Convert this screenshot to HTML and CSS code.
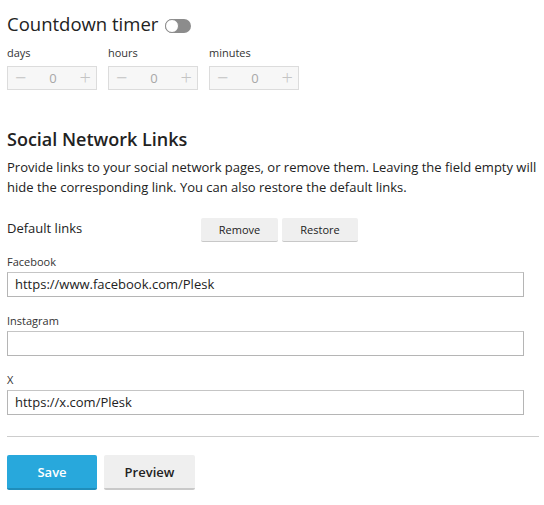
FILE: index.html
```html
<!DOCTYPE html>
<html>
<head>
<meta charset="utf-8">
<link rel="stylesheet" href="styles.css">
</head>
<body>
<div class="page">
  <h2 class="title">Countdown timer <span class="toggle"><span class="knob"></span></span></h2>
  <div class="timers">
    <div class="timer">
      <div class="small-label">days</div>
      <div class="stepper"><span class="op">&minus;</span><span class="val">0</span><span class="op">+</span></div>
    </div>
    <div class="timer">
      <div class="small-label">hours</div>
      <div class="stepper"><span class="op">&minus;</span><span class="val">0</span><span class="op">+</span></div>
    </div>
    <div class="timer">
      <div class="small-label">minutes</div>
      <div class="stepper"><span class="op">&minus;</span><span class="val">0</span><span class="op">+</span></div>
    </div>
  </div>

  <h3 class="section">Social Network Links</h3>
  <p class="desc">Provide links to your social network pages, or remove them. Leaving the field empty will hide the corresponding link. You can also restore the default links.</p>

  <div class="defaults">
    <span class="def-label">Default links</span>
    <div class="btns">
      <button class="btn">Remove</button>
      <button class="btn">Restore</button>
    </div>
  </div>

  <div class="field">
    <div class="small-label">Facebook</div>
    <div class="input">https://www.facebook.com/Plesk</div>
  </div>
  <div class="field">
    <div class="small-label">Instagram</div>
    <div class="input"></div>
  </div>
  <div class="field">
    <div class="small-label">X</div>
    <div class="input">https://x.com/Plesk</div>
  </div>

  <hr class="divider">

  <div class="actions">
    <button class="btn-main save">Save</button>
    <button class="btn-main preview">Preview</button>
  </div>
</div>
</body>
</html>
```
FILE: styles.css
```css
* { box-sizing: border-box; }
body {
  margin: 0;
  background: #fff;
  font-family: "Open Sans", sans-serif;
  color: #222;
}
.page {
  padding: 10px 5px 0 7px;
}
.title {
  margin: 0;
  font-size: 18.5px;
  font-weight: 500;
  line-height: 28px;
  color: #222;
  display: flex;
  align-items: center;
}
.toggle {
  display: inline-block;
  width: 26px;
  height: 14px;
  border-radius: 7px;
  background: #8c8c8c;
  margin-left: 7px;
  margin-top: 3px;
  position: relative;
}
.knob {
  position: absolute;
  left: 0;
  top: 0;
  width: 14px;
  height: 14px;
  border-radius: 50%;
  background: #fff;
  border: 1px solid #8c8c8c;
}
.timers {
  display: flex;
  gap: 11px;
  margin-top: 7px;
}
.timer { width: 90px; }
.small-label {
  font-size: 11px;
  line-height: 15px;
  color: #333;
}
.timers .small-label { margin-bottom: 6px; }
.stepper {
  height: 24px;
  border: 1px solid #dcdcdc;
  background: #f7f7f7;
  display: flex;
  align-items: center;
  justify-content: space-between;
  padding: 0 5px 0 7px;
  color: #b8b8b8;
}
.op {
  font-size: 20px;
  font-weight: 300;
  line-height: 20px;
  color: #c4c4c4;
}
.val {
  font-size: 13px;
  color: #a8a8a8;
}
.section {
  margin: 36px 0 0;
  font-size: 18px;
  font-weight: 600;
  line-height: 26px;
  color: #222;
}
.desc {
  margin: 5px 0 0;
  font-size: 13px;
  line-height: 20px;
  color: #222;
  max-width: 532px;
}
.defaults {
  display: flex;
  align-items: center;
  margin-top: 21px;
}
.def-label {
  width: 194px;
  font-size: 13px;
  margin-top: -5px;
}
.btns { display: flex; gap: 4px; }
.btn {
  font-family: "Open Sans", sans-serif;
  font-size: 11px;
  color: #222;
  background: #efefef;
  border: 0;
  border-bottom: 1px solid #c8c8c8;
  border-radius: 2px;
  height: 24px;
  width: 77px;
  padding: 0;
}
.btn + .btn { width: 76px; }
.field { margin-top: 12px; }
.field + .field { margin-top: 16px; }
.field .small-label { margin-bottom: 3px; }
.input {
  width: 517px;
  height: 25px;
  border: 1px solid #b5b5b5;
  border-top-color: #c5c5c5;
  font-size: 13px;
  line-height: 23px;
  padding: 0 7px;
  color: #222;
}
.divider {
  border: 0;
  border-top: 1px solid #cdcdcd;
  margin: 21px 0 0;
  width: 532px;
}
.actions {
  display: flex;
  gap: 7px;
  margin-top: 18px;
}
.btn-main {
  height: 35px;
  width: 90px;
  border: 0;
  border-radius: 2px;
  font-family: "Open Sans", sans-serif;
  font-size: 13px;
  font-weight: 600;
  padding: 0;
}
.save {
  background: #28a8dc;
  color: #fff;
  border-bottom: 2px solid #1f8dba;
}
.preview {
  width: 91px;
  background: #efefef;
  color: #222;
  border-bottom: 2px solid #c9c9c9;
}
```
